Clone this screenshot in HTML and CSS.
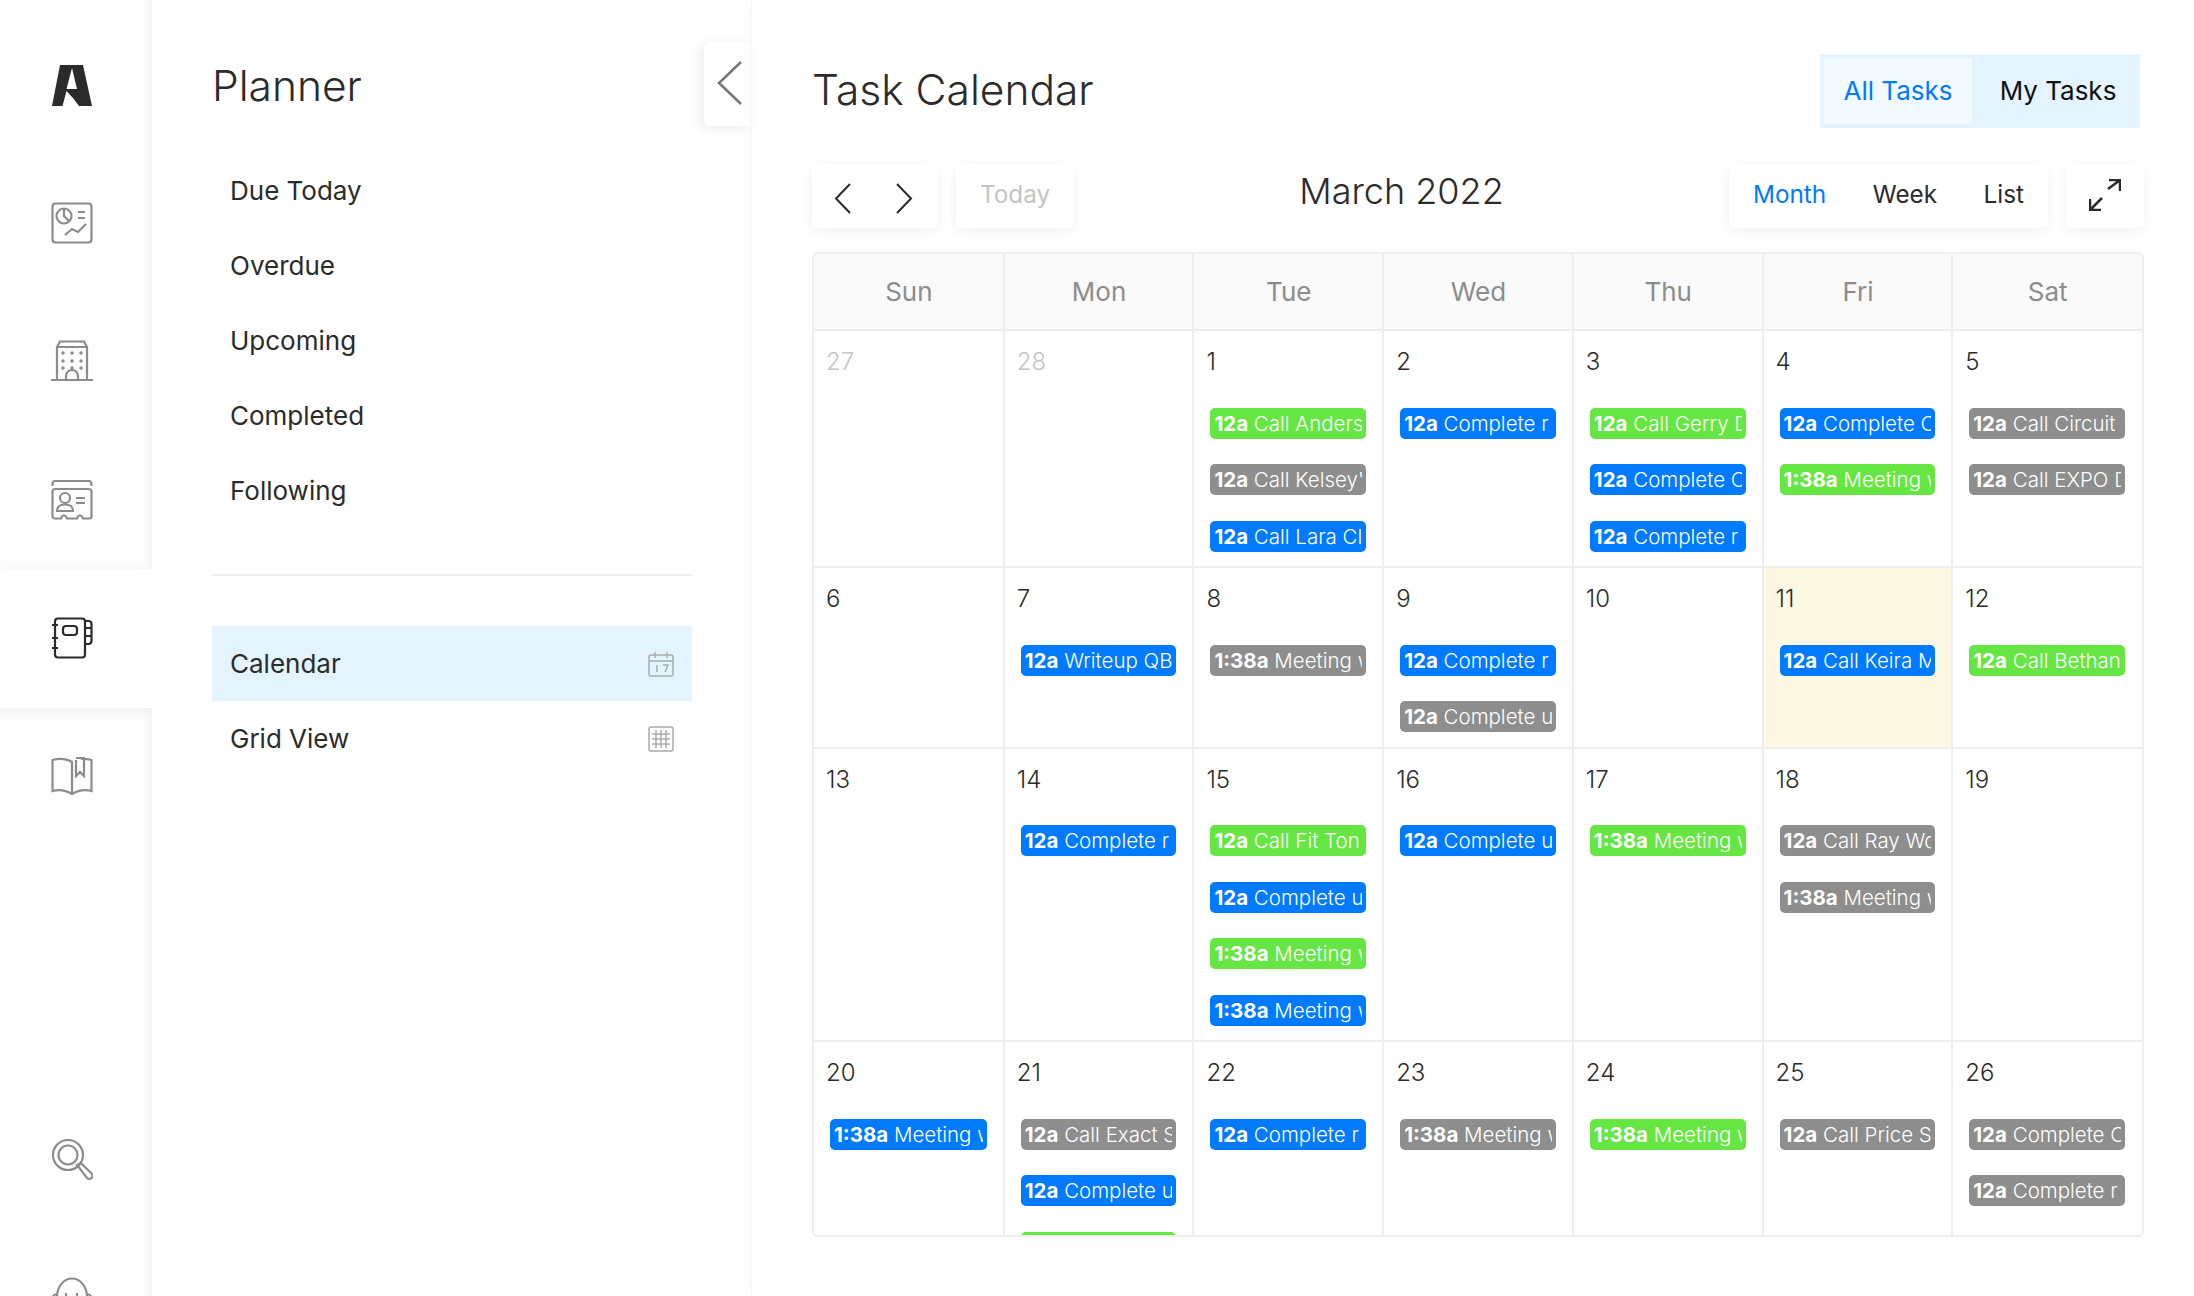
FILE: index.html
```html
<!DOCTYPE html>
<html lang="en">
<head>
    <meta charset="UTF-8">
    <title>Task Calendar</title>
    <link rel="stylesheet" href="styles.css">
</head>
<body>

    <!-- Icon rail -->
    <nav class="rail">
        <div class="rail-item logo">
            <svg width="40" height="41" viewBox="0 0 40 41"><path fill="#2b2b2b" fill-rule="evenodd" d="M0 41 8 0H31L40 41H27L21 33 14.500 26 10.500 41ZM20 3 14.500 24 25 24Z"/></svg>
        </div>
        <div class="rail-item">
            <svg class="ico" width="42" height="42" viewBox="0 0 42 42"><rect x="1.5" y="1.5" width="39" height="39" rx="3"/><circle cx="13" cy="14" r="7.5"/><path d="M13 7V14L18 19M27 10H34M27 16H34M14 33 21 27 27 30 35 22"/></svg>
        </div>
        <div class="rail-item">
            <svg class="ico" width="42" height="42" viewBox="0 0 42 42"><path d="M0 40H42M6 40V7L9 1.5H33L36 7V40M6 7H36M15 40V36A6 6 0 0 1 27 36V40"/><path class="dots" d="M12 13h.01M21 13h.01M30 13h.01M12 21h.01M21 21h.01M30 21h.01M12 28h.01M21 28h.01M30 28h.01"/></svg>
        </div>
        <div class="rail-item">
            <svg class="ico" width="42" height="42" viewBox="0 0 42 42"><path d="M1.500 7V4.500A2.500 2.500 0 0 1 4 2H38A2.500 2.500 0 0 1 40.500 4.500V7"/><path d="M4 10H38A2.500 2.500 0 0 1 40.500 12.500V37A2.500 2.500 0 0 1 38 39.500H32C31 35.500 27 35.500 26 39.500H16C15 35.500 11 35.500 10 39.500H4A2.500 2.500 0 0 1 1.500 37V12.500A2.500 2.500 0 0 1 4 10Z"/><circle cx="14" cy="19" r="5"/><path d="M6 32C6 27 9 25.500 14 25.500S22 27 22 32ZM25 19H34M25 24H34"/></svg>
        </div>
        <div class="rail-item active">
            <svg class="ico" width="42" height="42" viewBox="0 0 42 42"><rect x="4" y="1.500" width="30" height="39" rx="3"/><rect x="12" y="9" width="14" height="9" rx="3"/><path d="M1 8H7M1 21H7M1 31H7M34 4H38A3 3 0 0 1 40.500 7V24A3 3 0 0 1 38 27H34M34 11H40.500M34 19H40.500"/></svg>
        </div>
        <div class="rail-item">
            <svg class="ico" width="42" height="42" viewBox="0 0 42 42"><path d="M21 38V6C17 3 9 2 1.500 4V35C9 33 16 35 21 38C26 35 33 33 40.500 35V4C37 3 33 2.500 30 3M25 4V20L29 16 33 20V2H25"/></svg>
        </div>
        <div class="rail-bottom">
            <div class="rail-item">
                <svg class="ico" width="42" height="42" viewBox="0 0 42 42"><circle cx="17" cy="17" r="15"/><circle cx="17" cy="17" r="9.500"/><path d="M26 27 30 25 40.500 35.500A3 3 0 0 1 36 40Z"/></svg>
            </div>
            <div class="rail-item">
                <svg class="ico" width="42" height="42" viewBox="0 0 42 42"><path d="M6 20A15 18.500 0 0 1 36 20M6 17A6 6 0 0 0 1.500 26M36 17A6 6 0 0 1 40.500 26M15 16V26M26 16V26"/></svg>
            </div>
        </div>
    </nav>

    <!-- Planner sidebar -->
    <aside class="sidebar">
        <h2 class="sidebar-title">Planner</h2>
        <ul class="side-nav">
            <li>Due Today</li>
            <li>Overdue</li>
            <li>Upcoming</li>
            <li>Completed</li>
            <li>Following</li>
        </ul>
        <div class="side-views">
            <div class="side-view selected">
                Calendar
                <svg class="mini" width="26" height="26" viewBox="0 0 26 26"><rect x="1" y="4" width="24" height="21" rx="2"/><path d="M1 10H25M7 1V7M19 1V7M9 14V21M15 14H20L17 21"/></svg>
            </div>
            <div class="side-view">
                Grid View
                <svg class="mini" width="26" height="26" viewBox="0 0 26 26"><rect x="1" y="1" width="24" height="24" rx="2"/><path d="M8 4V22M13 4V22M18 4V22M4 8H22M4 13H22M4 18H22"/></svg>
            </div>
        </div>
        <button class="collapse-tab">
            <svg width="26" height="44" viewBox="0 0 26 44"><path d="M24 1 2 22 24 43" fill="none" stroke="#777" stroke-width="2.500"/></svg>
        </button>
    </aside>

    <!-- Calendar -->
    <main class="main">
        <header class="main-head">
            <h1 class="page-title">Task Calendar</h1>
            <div class="task-toggle">
                <span class="toggle-btn on">All Tasks</span>
                <span class="toggle-btn">My Tasks</span>
            </div>
        </header>

        <div class="toolbar">
            <div class="tool-side">
                <div class="card nav-arrows">
                    <svg width="17" height="31" viewBox="0 0 17 31"><path d="M16 1 2 15.500 16 30" fill="none" stroke="#2b2b2b" stroke-width="2"/></svg>
                    <svg width="17" height="31" viewBox="0 0 17 31"><path d="M1 1 15 15.500 1 30" fill="none" stroke="#2b2b2b" stroke-width="2"/></svg>
                </div>
                <div class="card today">Today</div>
            </div>
            <h2 class="month-title">March 2022</h2>
            <div class="tool-side">
                <div class="card views">
                    <span class="view on">Month</span>
                    <span class="view">Week</span>
                    <span class="view">List</span>
                </div>
                <div class="card expand">
                    <svg width="32" height="32" viewBox="0 0 32 32"><path d="M19 10 31 1M20 1H31V12M1 31 13 19M1 20V31H12" fill="none" stroke="#2b2b2b" stroke-width="2.500"/></svg>
                </div>
            </div>
        </div>

        <div class="calendar">
            <div class="dow">Sun</div><div class="dow">Mon</div><div class="dow">Tue</div><div class="dow">Wed</div><div class="dow">Thu</div><div class="dow">Fri</div><div class="dow">Sat</div>

            <div class="day"><div class="num off">27</div></div>
            <div class="day"><div class="num off">28</div></div>
            <div class="day"><div class="num">1</div>
                <div class="ev green"><span><b>12a</b> Call Anders</span></div>
                <div class="ev gray"><span><b>12a</b> Call Kelsey'</span></div>
                <div class="ev blue"><span><b>12a</b> Call Lara Cl</span></div>
            </div>
            <div class="day"><div class="num">2</div>
                <div class="ev blue"><span><b>12a</b> Complete r</span></div>
            </div>
            <div class="day"><div class="num">3</div>
                <div class="ev green"><span><b>12a</b> Call Gerry D</span></div>
                <div class="ev blue"><span><b>12a</b> Complete C</span></div>
                <div class="ev blue"><span><b>12a</b> Complete r</span></div>
            </div>
            <div class="day"><div class="num">4</div>
                <div class="ev blue"><span><b>12a</b> Complete C</span></div>
                <div class="ev green"><span><b>1:38a</b> Meeting w</span></div>
            </div>
            <div class="day"><div class="num">5</div>
                <div class="ev gray"><span><b>12a</b> Call Circuit</span></div>
                <div class="ev gray"><span><b>12a</b> Call EXPO D</span></div>
            </div>

            <div class="day"><div class="num">6</div></div>
            <div class="day"><div class="num">7</div>
                <div class="ev blue"><span><b>12a</b> Writeup QB</span></div>
            </div>
            <div class="day"><div class="num">8</div>
                <div class="ev gray"><span><b>1:38a</b> Meeting w</span></div>
            </div>
            <div class="day"><div class="num">9</div>
                <div class="ev blue"><span><b>12a</b> Complete r</span></div>
                <div class="ev gray"><span><b>12a</b> Complete u</span></div>
            </div>
            <div class="day"><div class="num">10</div></div>
            <div class="day now"><div class="num">11</div>
                <div class="ev blue"><span><b>12a</b> Call Keira M</span></div>
            </div>
            <div class="day"><div class="num">12</div>
                <div class="ev green"><span><b>12a</b> Call Bethan</span></div>
            </div>

            <div class="day"><div class="num">13</div></div>
            <div class="day"><div class="num">14</div>
                <div class="ev blue"><span><b>12a</b> Complete r</span></div>
            </div>
            <div class="day"><div class="num">15</div>
                <div class="ev green"><span><b>12a</b> Call Fit Ton</span></div>
                <div class="ev blue"><span><b>12a</b> Complete u</span></div>
                <div class="ev green"><span><b>1:38a</b> Meeting w</span></div>
                <div class="ev blue"><span><b>1:38a</b> Meeting w</span></div>
            </div>
            <div class="day"><div class="num">16</div>
                <div class="ev blue"><span><b>12a</b> Complete u</span></div>
            </div>
            <div class="day"><div class="num">17</div>
                <div class="ev green"><span><b>1:38a</b> Meeting w</span></div>
            </div>
            <div class="day"><div class="num">18</div>
                <div class="ev gray"><span><b>12a</b> Call Ray Wo</span></div>
                <div class="ev gray"><span><b>1:38a</b> Meeting w</span></div>
            </div>
            <div class="day"><div class="num">19</div></div>

            <div class="day"><div class="num">20</div>
                <div class="ev blue"><span><b>1:38a</b> Meeting w</span></div>
            </div>
            <div class="day"><div class="num">21</div>
                <div class="ev gray"><span><b>12a</b> Call Exact S</span></div>
                <div class="ev blue"><span><b>12a</b> Complete u</span></div>
                <div class="ev green"></div>
            </div>
            <div class="day"><div class="num">22</div>
                <div class="ev blue"><span><b>12a</b> Complete r</span></div>
            </div>
            <div class="day"><div class="num">23</div>
                <div class="ev gray"><span><b>1:38a</b> Meeting w</span></div>
            </div>
            <div class="day"><div class="num">24</div>
                <div class="ev green"><span><b>1:38a</b> Meeting w</span></div>
            </div>
            <div class="day"><div class="num">25</div>
                <div class="ev gray"><span><b>12a</b> Call Price S</span></div>
            </div>
            <div class="day"><div class="num">26</div>
                <div class="ev gray"><span><b>12a</b> Complete C</span></div>
                <div class="ev gray"><span><b>12a</b> Complete r</span></div>
            </div>
        </div>
    </main>

</body>
</html>
```

FILE: styles.css
```css
* {
    box-sizing: border-box;
}

html, body {
    height: 100%;
}

body {
    margin: 0;
    display: flex;
    height: 1296px;
    overflow: hidden;
    background: #fff;
    font-family: Inter, 'Noto Sans', sans-serif;
    color: #2b2b2b;
}

h1, h2, ul {
    margin: 0;
    padding: 0;
    font-weight: 400;
}

/* Rail */
.rail {
    flex: 0 0 152px;
    height: 1296px;
    padding-top: 15px;
    background: #fdfdfd;
    box-shadow: inset -10px 0 10px -8px #f1f1f1;
    overflow: hidden;
}

.rail-item {
    height: 138.5px;
    padding-right: 8px;
    display: flex;
    align-items: center;
    justify-content: center;
}

.rail-item.logo {
    padding-top: 3px;
}

.rail-item.active {
    background: #fff;
    box-shadow: 0 4px 12px rgba(0,0,0,0.06);
}

.rail-bottom {
    margin-top: 244px;
}

.ico {
    fill: none;
    stroke: #8c8c8c;
    stroke-width: 2.2;
}

.ico .dots {
    stroke-width: 3.5;
    stroke-linecap: round;
}

.active .ico {
    stroke: #2b2b2b;
}

/* Sidebar */
.sidebar {
    position: relative;
    flex: 0 0 600px;
    padding: 62px 60px 0;
    background: #fff;
}

.sidebar-title {
    font-size: 42.5px;
    line-height: 48px;
    font-weight: 300;
}

.side-nav {
    list-style: none;
    margin-top: 43px;
    padding-bottom: 46px;
    border-bottom: 2px solid #eee;
}

.side-nav li {
    height: 75px;
    padding-left: 18px;
    font-size: 26px;
    line-height: 75px;
}

.side-views {
    margin-top: 50px;
}

.side-view {
    display: flex;
    align-items: center;
    justify-content: space-between;
    height: 75px;
    padding: 0 18px;
    font-size: 26px;
}

.side-view.selected {
    background: #e3f4fe;
}

.mini {
    fill: none;
    stroke: #aaa;
    stroke-width: 1.5;
}

.collapse-tab {
    position: absolute;
    top: 42px;
    right: 0;
    width: 48px;
    height: 84px;
    padding: 0 0 0 3px;
    border: 0;
    border-radius: 6px 0 0 6px;
    background: #fff;
    box-shadow: -4px 2px 12px rgba(0,0,0,0.08);
}

/* Main */
.main {
    flex: 1;
    min-width: 0;
    padding: 54px 50px 0 60px;
    box-shadow: -1px 0 0 #f6f6f6, -4px 0 10px rgba(0,0,0,0.02);
    z-index: 1;
}

.main-head {
    display: flex;
    align-items: center;
    justify-content: space-between;
    padding-right: 4px;
}

.page-title {
    font-size: 42.5px;
    font-weight: 300;
    position: relative;
    top: -2px;
}

.task-toggle {
    display: flex;
    width: 320px;
    height: 74px;
    padding: 4px;
    background: #e3f4fe;
}

.toggle-btn {
    flex: 1;
    padding-left: 8px;
    font-size: 26px;
    line-height: 66px;
    text-align: center;
    color: #111;
}

.toggle-btn.on {
    flex: 0 0 148px;
    padding-left: 0;
    background: #f2faff;
    color: #007aff;
}

.toolbar {
    display: flex;
    align-items: center;
    justify-content: space-between;
    margin-top: 36px;
}

.tool-side {
    display: flex;
    gap: 18px;
}

.card {
    height: 64px;
    padding-bottom: 4px;
    background: #fff;
    border-radius: 6px;
    box-shadow: 0 3px 12px rgba(0,0,0,0.06);
    display: flex;
    align-items: center;
    font-size: 24.3px;
}

.nav-arrows {
    width: 126px;
    justify-content: space-between;
    padding: 4px 25px 0 22px;
}

.today {
    width: 118px;
    justify-content: center;
    color: #c4c4c4;
}

.views {
    width: 319px;
    justify-content: space-between;
    padding: 0 24px 4px;
}

.view.on {
    color: #007aff;
}

.expand {
    width: 78px;
    padding-bottom: 2px;
    justify-content: center;
}

.month-title {
    font-size: 36px;
    font-weight: 300;
    position: relative;
    top: -5px;
}

/* Month grid */
.calendar {
    display: grid;
    grid-template-columns: repeat(7, 1fr);
    grid-template-rows: 77px auto auto auto auto;
    align-content: start;
    height: 985px;
    margin-top: 24px;
    border: 2px solid #eee;
    border-radius: 6px;
    overflow: hidden;
}

.dow {
    display: flex;
    align-items: center;
    justify-content: center;
    margin-left: -1px;
    background: #fafafa;
    border-left: 2px solid #eee;
    border-bottom: 2px solid #eee;
    font-size: 26px;
    color: #8c8c8c;
}

.day {
    display: flex;
    flex-direction: column;
    gap: 25.5px;
    min-width: 0;
    margin-left: -1px;
    padding: 0 17px 14.5px 16px;
    border-left: 2px solid #eee;
    border-bottom: 2px solid #eee;
}

.dow:nth-child(7n+1), .day:nth-child(7n+1) {
    margin-left: 0;
    border-left: 0;
}

.day.now {
    background: #fcf8e3;
}

.num {
    height: 52px;
    margin: 0 -4px -1px;
    padding-top: 13px;
    font-size: 24px;
    line-height: 36px;
    font-weight: 300;
}

.num.off {
    color: #c4c4c4;
}

.ev {
    height: 31px;
    padding: 0 4px;
    border-radius: 5px;
    color: #fff;
    font-size: 20.5px;
    font-weight: 300;
    line-height: 31px;
    flex: none;
}

.ev span {
    display: block;
    overflow: hidden;
    white-space: nowrap;
}

.ev b {
    font-weight: 700;
}

.green { background: #66e642; }
.gray { background: #8e8e8e; }
.blue { background: #007aff; }
```
